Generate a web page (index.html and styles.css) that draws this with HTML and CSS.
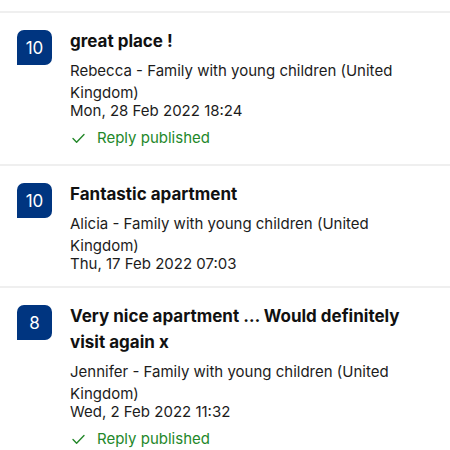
FILE: index.html
```html
<!DOCTYPE html>
<html lang="en">
<head>
<meta charset="utf-8">
<title>Reviews</title>
<link rel="stylesheet" href="styles.css">
</head>
<body>
<div class="list">
  <div class="review">
    <div class="badge">10</div>
    <div class="content">
      <div class="title">great place !</div>
      <div class="name">Rebecca - Family with young children (United Kingdom)</div>
      <div class="date">Mon, 28 Feb 2022 18:24</div>
      <div class="reply">
        <svg class="check" width="13" height="11" viewBox="0 0 13 11"><path d="M1 5.6 L4.6 9.2 L12 1.4" fill="none" stroke="#24882a" stroke-width="1.4" stroke-linecap="round" stroke-linejoin="round"/></svg>
        <span>Reply published</span>
      </div>
    </div>
  </div>
  <div class="review">
    <div class="badge">10</div>
    <div class="content">
      <div class="title">Fantastic apartment</div>
      <div class="name">Alicia - Family with young children (United Kingdom)</div>
      <div class="date">Thu, 17 Feb 2022 07:03</div>
    </div>
  </div>
  <div class="review">
    <div class="badge">8</div>
    <div class="content">
      <div class="title">Very nice apartment … Would definitely visit again x</div>
      <div class="name">Jennifer - Family with young children (United Kingdom)</div>
      <div class="date">Wed, 2 Feb 2022 11:32</div>
      <div class="reply">
        <svg class="check" width="13" height="11" viewBox="0 0 13 11"><path d="M1 5.6 L4.6 9.2 L12 1.4" fill="none" stroke="#24882a" stroke-width="1.4" stroke-linecap="round" stroke-linejoin="round"/></svg>
        <span>Reply published</span>
      </div>
    </div>
  </div>
</div>
</body>
</html>
```

FILE: styles.css
```css
html, body {
  margin: 0;
  padding: 0;
  background: #ffffff;
}
body {
  font-family: Inter, "Noto Sans", "Liberation Sans", sans-serif;
  color: #1a1a1a;
}
.list {
  padding-top: 11px;
}
.review {
  display: flex;
  gap: 18px;
  padding: 15px 16px 15px 17px;
  border-top: 2px solid #efefef;
}
.badge {
  flex: 0 0 35px;
  width: 35px;
  height: 35px;
  margin-top: 2px;
  background: #003580;
  color: #ffffff;
  border-radius: 7px 7px 7px 0;
  display: flex;
  align-items: center;
  justify-content: center;
  font-size: 17px;
}
.content {
  flex: 1;
  min-width: 0;
  padding-right: 20px;
}
.title {
  font-size: 17px;
  font-weight: 700;
  line-height: 26px;
  margin-bottom: 6px;
  color: #111111;
}
.name {
  font-size: 15px;
  line-height: 22px;
  color: #1c1c1c;
}
.date {
  font-size: 15px;
  line-height: 14px;
  color: #1c1c1c;
}
.reply {
  display: flex;
  align-items: center;
  gap: 12px;
  margin-top: 9px;
  font-size: 15px;
  line-height: 22px;
  color: #24882a;
  padding-left: 2px;
}
.check {
  display: block;
}
```
